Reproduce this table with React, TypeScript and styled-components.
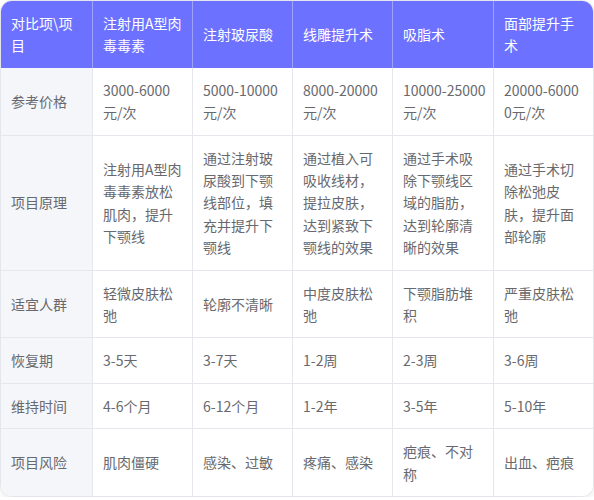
import React from "react";
import styled, { createGlobalStyle } from "styled-components";

const Global = createGlobalStyle`
  html, body { margin: 0; padding: 0; background: #ffffff; }
  body { font-family: "Noto Sans CJK SC", "Noto Sans", sans-serif; }
`;

const Card = styled.div`
  width: 594px;
  box-sizing: border-box;
  border: 1px solid #e4e6ee;
  border-radius: 12px;
  overflow: hidden;
  box-shadow: 0 2px 6px rgba(0, 0, 0, 0.08);
  background: #ffffff;
`;

const Grid = styled.div`
  display: grid;
  grid-template-columns: 92px 100px 100px 100px 101px 1fr;
`;

const Cell = styled.div<{ $head?: boolean; $first?: boolean; $last?: boolean; $bottom?: boolean }>`
  box-sizing: border-box;
  display: flex;
  align-items: center;
  padding: 11px 7px 11px 10px;
  font-size: 14px;
  line-height: 22.4px;
  word-break: break-all;
  color: ${(p) => (p.$head ? "#ffffff" : "#68696e")};
  background: ${(p) => (p.$head ? "#6c71ff" : p.$first ? "#f5f6fa" : "#ffffff")};
  border-right: ${(p) =>
    p.$last ? "none" : p.$head ? "1px solid rgba(255,255,255,0.35)" : "1px solid #e6e7ec"};
  border-bottom: ${(p) => (p.$bottom ? "none" : p.$head ? "none" : "1px solid #e6e7ec")};
`;

const header = ["对比项\\项目", "注射用A型肉毒毒素", "注射玻尿酸", "线雕提升术", "吸脂术", "面部提升手术"];

const rows: string[][] = [
  ["参考价格", "3000-6000元/次", "5000-10000元/次", "8000-20000元/次", "10000-25000元/次", "20000-60000元/次"],
  [
    "项目原理",
    "注射用A型肉毒毒素放松肌肉，提升下颚线",
    "通过注射玻尿酸到下颚线部位，填充并提升下颚线",
    "通过植入可吸收线材，提拉皮肤，达到紧致下颚线的效果",
    "通过手术吸除下颚线区域的脂肪，达到轮廓清晰的效果",
    "通过手术切除松弛皮肤，提升面部轮廓",
  ],
  ["适宜人群", "轻微皮肤松弛", "轮廓不清晰", "中度皮肤松弛", "下颚脂肪堆积", "严重皮肤松弛"],
  ["恢复期", "3-5天", "3-7天", "1-2周", "2-3周", "3-6周"],
  ["维持时间", "4-6个月", "6-12个月", "1-2年", "3-5年", "5-10年"],
  ["项目风险", "肌肉僵硬", "感染、过敏", "疼痛、感染", "疤痕、不对称", "出血、疤痕"],
];

export default function App() {
  return (
    <>
      <Global />
      <Card>
        <Grid>
          {header.map((h, i) => (
            <Cell key={"h" + i} $head $last={i === header.length - 1}>
              {h}
            </Cell>
          ))}
          {rows.map((r, ri) =>
            r.map((c, ci) => (
              <Cell
                key={ri + "-" + ci}
                $first={ci === 0}
                $last={ci === r.length - 1}
                $bottom={ri === rows.length - 1}
              >
                {c}
              </Cell>
            ))
          )}
        </Grid>
      </Card>
    </>
  );
}
